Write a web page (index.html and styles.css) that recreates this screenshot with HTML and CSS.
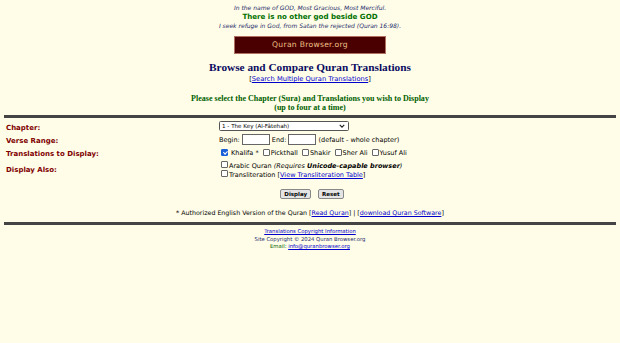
FILE: index.html
```html
<!DOCTYPE html>
<html>
<head>
<meta charset="utf-8">
<title>Quran Browser</title>
<link rel="stylesheet" href="styles.css">
</head>
<body>
<div class="page">
  <div class="head">
    <p class="bism">In the name of GOD, Most Gracious, Most Merciful.</p>
    <p class="shahada">There is no other god beside GOD</p>
    <p class="refuge">I seek refuge in God, from Satan the rejected (Quran 16:98).</p>
    <div class="logo">Quran Browser.org</div>
    <h1 class="title">Browse and Compare Quran Translations</h1>
    <p class="search">[<a href="#">Search Multiple Quran Translations</a>]</p>
    <p class="instr">Please select the Chapter (Sura) and Translations you wish to Display<br>(up to four at a time)</p>
  </div>
  <hr class="rule top">
  <form class="form">
    <div class="label">Chapter:</div>
    <div class="field">
      <span class="sel"><span class="sel-text">1 - The Key (Al-Fâtehah)</span><svg class="chev" viewBox="0 0 8 5" width="6" height="4"><path d="M1 1 L4 4 L7 1" fill="none" stroke="#222" stroke-width="1.6"/></svg></span>
    </div>
    <div class="label">Verse Range:</div>
    <div class="field">
      Begin: <span class="inp"></span> End: <span class="inp"></span> (default - whole chapter)
    </div>
    <div class="label">Translations to Display:</div>
    <div class="field">
      <span class="cb checked"></span>&nbsp;Khalifa *
      <span class="cb"></span>Pickthall
      <span class="cb"></span>Shakir
      <span class="cb"></span>Sher Ali
      <span class="cb"></span>Yusuf Ali
    </div>
    <div class="label label-also">Display Also:</div>
    <div class="field also">
      <div><span class="cb"></span>Arabic Quran <i>(Requires <b>Unicode-capable browser</b>)</i></div>
      <div><span class="cb"></span>Transliteration [<a href="#">View Transliteration Table</a>]</div>
    </div>
    <div class="buttons">
      <span class="btn">Display</span>
      <span class="btn">Reset</span>
    </div>
  </form>
  <p class="note">* Authorized English Version of the Quran [<a href="#">Read Quran</a>] | [<a href="#">download Quran Software</a>]</p>
  <hr class="rule bottom">
  <div class="foot">
    <p><a href="#">Translations Copyright Information</a></p>
    <p>Site Copyright © 2024 Quran Browser.org</p>
    <p class="mail">Email: <a href="#">info@quranbrowser.org</a></p>
  </div>
</div>
</body>
</html>
```
FILE: styles.css
```css
html, body {
  margin: 0;
  padding: 0;
  background: #fffde8;
}
body {
  font-family: "DejaVu Sans", Verdana, sans-serif;
  color: #000;
}
.page {
  padding: 0 4px;
}
p { margin: 0; }
a { color: #0000cc; text-decoration: underline; }

.head {
  display: flex;
  flex-direction: column;
  align-items: center;
  text-align: center;
  padding-top: 3px;
}
.bism, .refuge {
  font-style: italic;
  color: #1b2a6b;
  font-size: 6px;
  line-height: 9px;
}
.shahada {
  color: #007000;
  font-weight: bold;
  font-size: 7.1px;
  line-height: 9px;
}
.logo {
  margin-top: 6px;
  width: 150px;
  height: 16px;
  background: #4a0000;
  border: 1px solid #b07060;
  color: #f0c08a;
  font-size: 7.6px;
  line-height: 16px;
  letter-spacing: 0.3px;
}
.title {
  margin: 6px 0 0;
  font-family: "Liberation Serif", "Times New Roman", serif;
  font-size: 11.3px;
  line-height: 14px;
  color: #0a0a60;
}
.search {
  font-size: 6.7px;
  line-height: 9px;
  margin-top: 1px;
}
.instr {
  margin-top: 10px;
  font-family: "Liberation Serif", "Times New Roman", serif;
  font-weight: bold;
  color: #006000;
  font-size: 8.05px;
  line-height: 9px;
}
.rule {
  height: 0;
  border: 0;
  border-top: 3px solid #444;
}
.rule.top { margin: 3px 0 0; }
.rule.bottom { margin: 5px 0 0; }

.form {
  display: grid;
  grid-template-columns: 213px 1fr;
  grid-auto-rows: 13px;
  align-items: center;
  font-size: 6.5px;
  padding: 3px 0 0 2px;
}
.label {
  color: #800000;
  font-weight: bold;
  font-size: 7px;
}
.label-also {
  grid-row: span 2;
  align-self: start;
  padding-top: 5.5px;
}
.field { line-height: 11px; white-space: nowrap; }
.sel {
  display: inline-flex;
  align-items: center;
  justify-content: space-between;
  width: 123px;
  height: 8px;
  padding: 0 3px 0 2px;
  border: 1px solid #555;
  border-radius: 1.5px;
  background: #fff;
  vertical-align: middle;
  margin-top: -2px;
}
.sel-text {
  font-size: 5.6px;
  line-height: 8px;
}
.chev { display: block; }
.inp {
  display: inline-block;
  width: 26px;
  height: 9px;
  border: 1px solid #666;
  background: #fff;
  vertical-align: middle;
  margin-top: -2px;
}
.cb {
  position: relative;
  display: inline-block;
  width: 5px;
  height: 5px;
  border: 1px solid #666;
  border-radius: 1px;
  background: #fff;
  vertical-align: middle;
  margin: -2px 1px 0 2px;
}
.cb.checked {
  background: #1a5fd8;
  border-color: #1a5fd8;
}
.cb.checked::after {
  content: "";
  position: absolute;
  left: 1.5px;
  top: 0;
  width: 1.5px;
  height: 3px;
  border: solid #fff;
  border-width: 0 1px 1px 0;
  transform: rotate(45deg);
}
.form .also {
  grid-row: span 2;
  align-self: start;
  padding-top: 1.5px;
}
.also div { line-height: 9px; }
.buttons {
  grid-column: 1 / 3;
  align-self: end;
  height: 10px;
  display: flex;
  justify-content: center;
  gap: 7px;
  margin-left: 2px;
}
.btn {
  display: inline-block;
  box-sizing: border-box;
  height: 10px;
  border: 1px solid #888;
  border-radius: 2px;
  background: #e4e4e4;
  font-size: 5.5px;
  font-weight: bold;
  padding: 0 3px;
  line-height: 8px;
}
.note {
  margin-top: 8.5px;
  text-align: center;
  font-size: 6.3px;
  line-height: 9px;
}
.foot {
  text-align: center;
  font-size: 5.3px;
  line-height: 7.5px;
  padding-top: 3.5px;
  color: #1b2a6b;
}
.mail { color: #006000; }
```
